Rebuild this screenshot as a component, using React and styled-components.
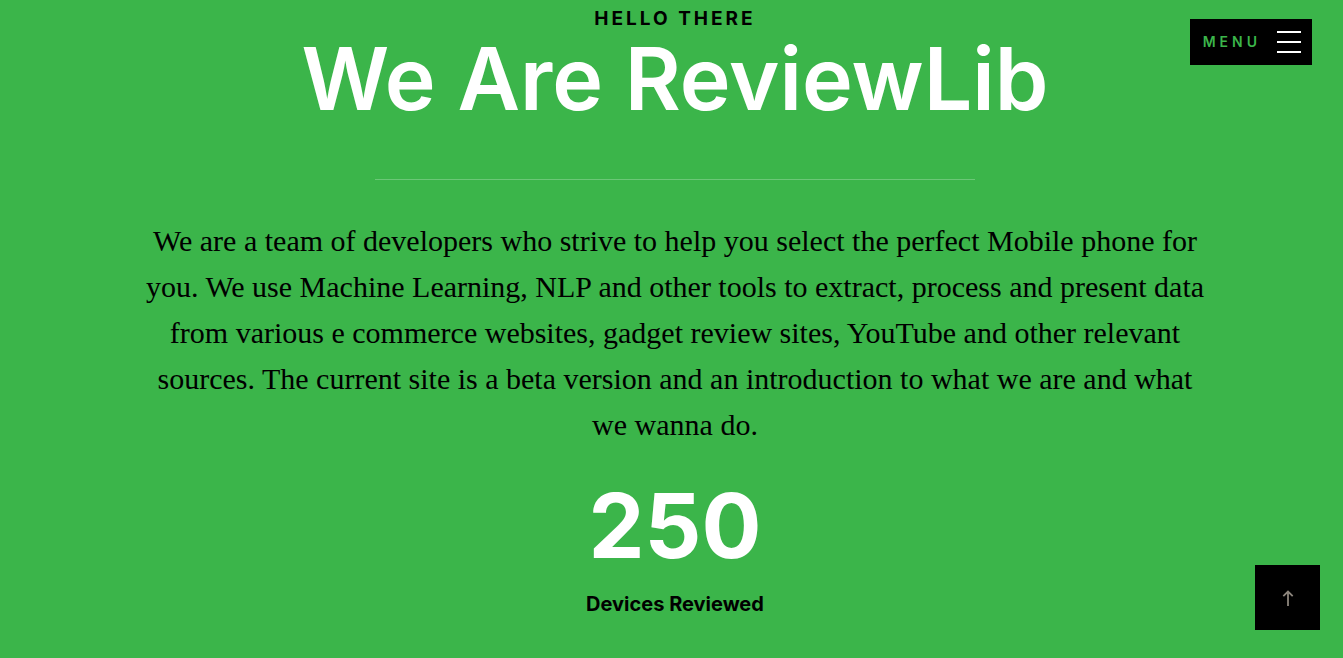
import React from "react";
import styled, { createGlobalStyle } from "styled-components";

const GlobalStyle = createGlobalStyle`
  *, *::before, *::after { box-sizing: border-box; }
  body {
    margin: 0;
    background: #3bb54a;
    color: #000;
    font-family: Inter, "Liberation Sans", sans-serif;
  }
`;

const About = styled.main`
  display: flex;
  flex-direction: column;
  align-items: center;
  min-height: 100vh;
  padding: 5px 113px 28px 120px;
  text-align: center;
`;

const Subhead = styled.h3`
  margin: 0;
  font-size: 19px;
  line-height: 28px;
  font-weight: 700;
  letter-spacing: 3px;
  text-transform: uppercase;
`;

const Title = styled.h1`
  margin: 0;
  color: #fff;
  font-size: 86px;
  line-height: 92px;
  font-weight: 600;
  white-space: nowrap;
`;

const Divider = styled.hr`
  width: 100%;
  max-width: 600px;
  height: 1px;
  margin: 54px 0 38px;
  border: 0;
  background: #6bc777;
`;

const Description = styled.p`
  max-width: 1070px;
  margin: 0;
  font-family: "Liberation Serif", serif;
  font-size: 30px;
  line-height: 46px;
`;

const Stat = styled.section`
  display: flex;
  flex-direction: column;
  align-items: center;
  margin-top: 28px;
`;

const StatNumber = styled.strong`
  color: #fff;
  font-size: 89px;
  line-height: 100px;
  font-weight: 700;
`;

const StatLabel = styled.h5`
  margin: 13px 0 0;
  font-size: 20px;
  line-height: 30px;
  font-weight: 700;
`;

const MenuButton = styled.button`
  position: fixed;
  top: 19px;
  right: 31px;
  display: flex;
  align-items: center;
  gap: 16px;
  height: 46px;
  padding: 0 11px 0 13px;
  border: 0;
  background: #000;
  color: #3bb54a;
  font-family: inherit;
  font-size: 14px;
  line-height: 20px;
  font-weight: 600;
  letter-spacing: 4px;
  text-transform: uppercase;
  cursor: pointer;
`;

const MenuBars = styled.span`
  display: flex;
  flex-direction: column;
  gap: 8px;
  width: 24px;

  i {
    height: 2px;
    background: #fff;
  }
`;

const TopLink = styled.a`
  position: fixed;
  right: 23px;
  bottom: 28px;
  display: flex;
  align-items: center;
  justify-content: center;
  width: 65px;
  height: 65px;
  background: #000;
  color: #8c857c;
`;

export default function App() {
  return (
    <>
      <GlobalStyle />
      <About id="top">
        <Subhead>Hello There</Subhead>
        <Title>We Are ReviewLib</Title>
        <Divider />
        <Description>
          We are a team of developers who strive to help you select the perfect
          Mobile phone for you. We use Machine Learning, NLP and other tools to
          extract, process and present data from various e commerce websites,
          gadget review sites, YouTube and other relevant sources. The current
          site is a beta version and an introduction to what we are and what we
          wanna do.
        </Description>
        <Stat>
          <StatNumber>250</StatNumber>
          <StatLabel>Devices Reviewed</StatLabel>
        </Stat>
      </About>
      <MenuButton type="button">
        Menu
        <MenuBars aria-hidden="true">
          <i />
          <i />
          <i />
        </MenuBars>
      </MenuButton>
      <TopLink href="#top" aria-label="Back to top">
        <svg width="12" height="16" viewBox="0 0 12 16" fill="none" stroke="currentColor" strokeWidth="1.8" aria-hidden="true">
          <path d="M6 16V1.500M1.300 6.200L6 1.500L10.700 6.200" />
        </svg>
      </TopLink>
    </>
  );
}
